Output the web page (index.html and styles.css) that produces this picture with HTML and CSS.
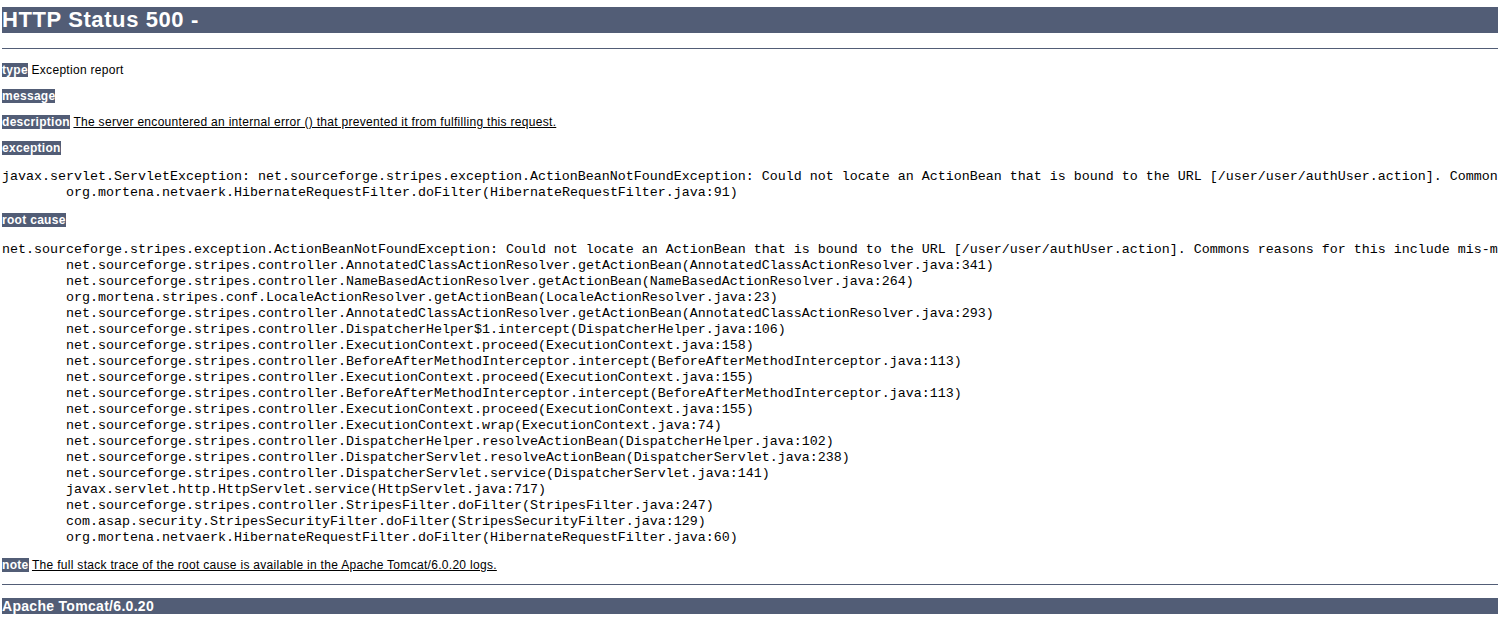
FILE: index.html
```html
<!DOCTYPE html>
<html lang="en">
<head>
    <meta charset="UTF-8">
    <title>Apache Tomcat/6.0.20 - Error report</title>
    <link rel="stylesheet" href="styles.css">
</head>
<body>
    <h1>HTTP Status 500 - </h1>
    <hr>
    <p><b>type</b> Exception report</p>
    <p><b>message</b> <u></u></p>
    <p><b>description</b> <u>The server encountered an internal error () that prevented it from fulfilling this request.</u></p>
    <p><b>exception</b></p>
    <pre class="trace trace-exception">javax.servlet.ServletException: net.sourceforge.stripes.exception.ActionBeanNotFoundException: Could not locate an ActionBean that is bound to the URL [/user/user/authUser.action]. Commons reasons for this include mis-matched URLs and forgetting to implement ActionBean in your class.
	org.mortena.netvaerk.HibernateRequestFilter.doFilter(HibernateRequestFilter.java:91)</pre>
    <p><b>root cause</b></p>
    <pre class="trace trace-root">net.sourceforge.stripes.exception.ActionBeanNotFoundException: Could not locate an ActionBean that is bound to the URL [/user/user/authUser.action]. Commons reasons for this include mis-matched URLs and forgetting to implement ActionBean in your class.
	net.sourceforge.stripes.controller.AnnotatedClassActionResolver.getActionBean(AnnotatedClassActionResolver.java:341)
	net.sourceforge.stripes.controller.NameBasedActionResolver.getActionBean(NameBasedActionResolver.java:264)
	org.mortena.stripes.conf.LocaleActionResolver.getActionBean(LocaleActionResolver.java:23)
	net.sourceforge.stripes.controller.AnnotatedClassActionResolver.getActionBean(AnnotatedClassActionResolver.java:293)
	net.sourceforge.stripes.controller.DispatcherHelper$1.intercept(DispatcherHelper.java:106)
	net.sourceforge.stripes.controller.ExecutionContext.proceed(ExecutionContext.java:158)
	net.sourceforge.stripes.controller.BeforeAfterMethodInterceptor.intercept(BeforeAfterMethodInterceptor.java:113)
	net.sourceforge.stripes.controller.ExecutionContext.proceed(ExecutionContext.java:155)
	net.sourceforge.stripes.controller.BeforeAfterMethodInterceptor.intercept(BeforeAfterMethodInterceptor.java:113)
	net.sourceforge.stripes.controller.ExecutionContext.proceed(ExecutionContext.java:155)
	net.sourceforge.stripes.controller.ExecutionContext.wrap(ExecutionContext.java:74)
	net.sourceforge.stripes.controller.DispatcherHelper.resolveActionBean(DispatcherHelper.java:102)
	net.sourceforge.stripes.controller.DispatcherServlet.resolveActionBean(DispatcherServlet.java:238)
	net.sourceforge.stripes.controller.DispatcherServlet.service(DispatcherServlet.java:141)
	javax.servlet.http.HttpServlet.service(HttpServlet.java:717)
	net.sourceforge.stripes.controller.StripesFilter.doFilter(StripesFilter.java:247)
	com.asap.security.StripesSecurityFilter.doFilter(StripesSecurityFilter.java:129)
	org.mortena.netvaerk.HibernateRequestFilter.doFilter(HibernateRequestFilter.java:60)</pre>
    <p class="note"><b>note</b> <u>The full stack trace of the root cause is available in the Apache Tomcat/6.0.20 logs.</u></p>
    <hr class="foot-rule">
    <h3>Apache Tomcat/6.0.20</h3>
</body>
</html>
```

FILE: styles.css
```css
html {
    overflow: hidden;
}

body {
    font-family: Tahoma, "Liberation Sans", Arial, sans-serif;
    color: black;
    background-color: white;
    margin: 0 0 0 2px;
}

h1 {
    font-family: Tahoma, "Liberation Sans", Arial, sans-serif;
    color: white;
    background-color: #525D76;
    font-size: 22px;
    font-weight: bold;
    letter-spacing: 0.6px;
    line-height: 26px;
    height: 26px;
    margin: 7px 0 0;
}

h3 {
    font-family: Tahoma, "Liberation Sans", Arial, sans-serif;
    color: white;
    background-color: #525D76;
    font-size: 14px;
    font-weight: bold;
    letter-spacing: 0.3px;
    line-height: 16px;
    height: 16px;
    margin: 13px 0 0;
}

hr {
    border: 0;
    border-top: 1px solid #525D76;
    height: 0;
    margin: 15px 0 14px;
}

hr.foot-rule {
    margin: 10px 0 0;
}

p {
    font-family: Tahoma, "Liberation Sans", Arial, sans-serif;
    background: white;
    color: black;
    font-size: 12px;
    letter-spacing: 0.3px;
    line-height: 14px;
    margin: 12px 0;
}

b {
    color: white;
    background-color: #525D76;
}

u {
    color: black;
}

.trace {
    font-family: "Courier New", "Liberation Mono", monospace;
    font-size: 13.33px;
    line-height: 16px;
    tab-size: 8;
    white-space: pre;
}

.trace-exception {
    margin: 14px 0 9px;
}

.trace-root {
    margin: 15px 0 12px;
}

p.note {
    margin-top: 12px;
}
```
